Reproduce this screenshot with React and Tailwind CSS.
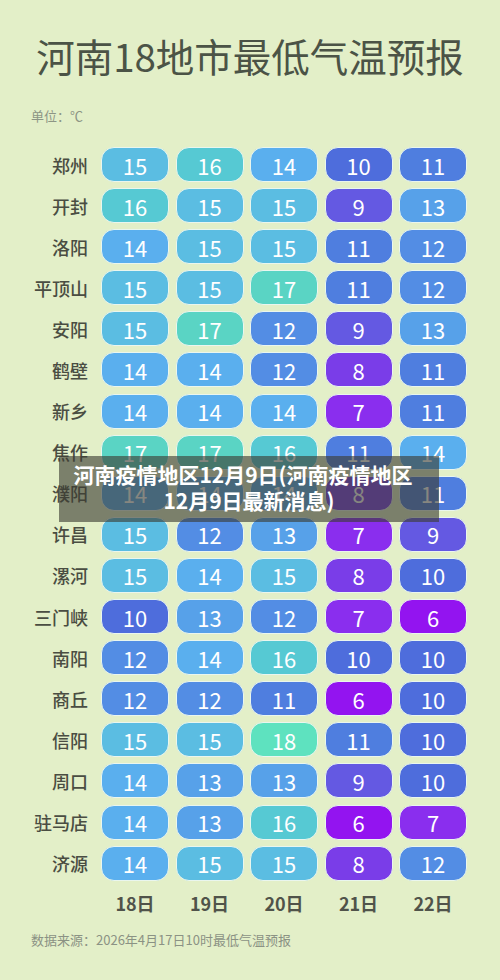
import React from "react";

const COLORS = {
  6: "bg-[#9314f0]",
  7: "bg-[#8a2eee]",
  8: "bg-[#7a3de8]",
  9: "bg-[#6459e2]",
  10: "bg-[#4e6ddc]",
  11: "bg-[#4f7edf]",
  12: "bg-[#538de4]",
  13: "bg-[#57a1e9]",
  14: "bg-[#5aafee]",
  15: "bg-[#5bbde2]",
  16: "bg-[#56c9d3]",
  17: "bg-[#5ad4c4]",
  18: "bg-[#5ee2bf]",
};

const DATA = [
  ["郑州", [15, 16, 14, 10, 11]],
  ["开封", [16, 15, 15, 9, 13]],
  ["洛阳", [14, 15, 15, 11, 12]],
  ["平顶山", [15, 15, 17, 11, 12]],
  ["安阳", [15, 17, 12, 9, 13]],
  ["鹤壁", [14, 14, 12, 8, 11]],
  ["新乡", [14, 14, 14, 7, 11]],
  ["焦作", [17, 17, 16, 11, 14]],
  ["濮阳", [14, 14, 14, 8, 11]],
  ["许昌", [15, 12, 13, 7, 9]],
  ["漯河", [15, 14, 15, 8, 10]],
  ["三门峡", [10, 13, 12, 7, 6]],
  ["南阳", [12, 14, 16, 10, 10]],
  ["商丘", [12, 12, 11, 6, 10]],
  ["信阳", [15, 15, 18, 11, 10]],
  ["周口", [14, 13, 13, 9, 10]],
  ["驻马店", [14, 13, 16, 6, 7]],
  ["济源", [14, 15, 15, 8, 12]],
];

const DAYS = ["18日", "19日", "20日", "21日", "22日"];

export default function App() {
  return (
    <div
      className="relative w-[500px] h-[980px] bg-[#e3efc8] overflow-hidden"
      style={{ fontFamily: '"Noto Sans CJK SC", "Noto Sans", sans-serif' }}
    >
      <h1 className="pt-[30px] text-center text-[38.5px] leading-[50px] font-normal text-[#4b5346]">
        河南18地市最低气温预报
      </h1>
      <div className="mt-[27px] pl-[31px] text-[13px] leading-[18px] text-[#8d9585]">
        单位：℃
      </div>
      <div className="mt-[22px] flex flex-col gap-[6.1px]">
        {DATA.map(([city, vals]) => (
          <div key={city} className="flex items-center h-[35px]">
            <div className="w-[88px] text-right text-[18px] font-medium text-[#4a4d42] leading-none">
              {city}
            </div>
            <div className="ml-[13px] flex gap-[6.5px]">
              {vals.map((v, i) => (
                <div
                  key={i}
                  className={`w-[68px] h-[35px] rounded-[13px] border border-[#eaf6ee] flex items-center justify-center text-white text-[22px] leading-none ${COLORS[v]}`}
                >
                  {v}
                </div>
              ))}
            </div>
          </div>
        ))}
      </div>
      <div className="mt-[9px] flex pl-[101px] gap-[6.5px]">
        {DAYS.map((d) => (
          <div
            key={d}
            className="w-[68px] text-center text-[18px] font-bold text-[#50534a] leading-[26px]"
          >
            {d}
          </div>
        ))}
      </div>
      <div className="mt-[14px] pl-[31px] text-[13px] leading-[20px] text-[#8b9284]">
        数据来源：2026年4月17日10时最低气温预报
      </div>

      <div className="absolute left-[59px] top-[456px] w-[380px] h-[66px] bg-[rgba(60,60,50,0.62)] flex flex-col items-center justify-center">
        <div className="text-white font-bold text-[21px] leading-[26px] text-center whitespace-nowrap -translate-y-[2px] -translate-x-[6px]">
          河南疫情地区12月9日(河南疫情地区
        </div>
        <div className="text-white font-bold text-[21px] leading-[26px] text-center whitespace-nowrap -translate-y-[2px]">
          12月9日最新消息)
        </div>
      </div>
    </div>
  );
}
